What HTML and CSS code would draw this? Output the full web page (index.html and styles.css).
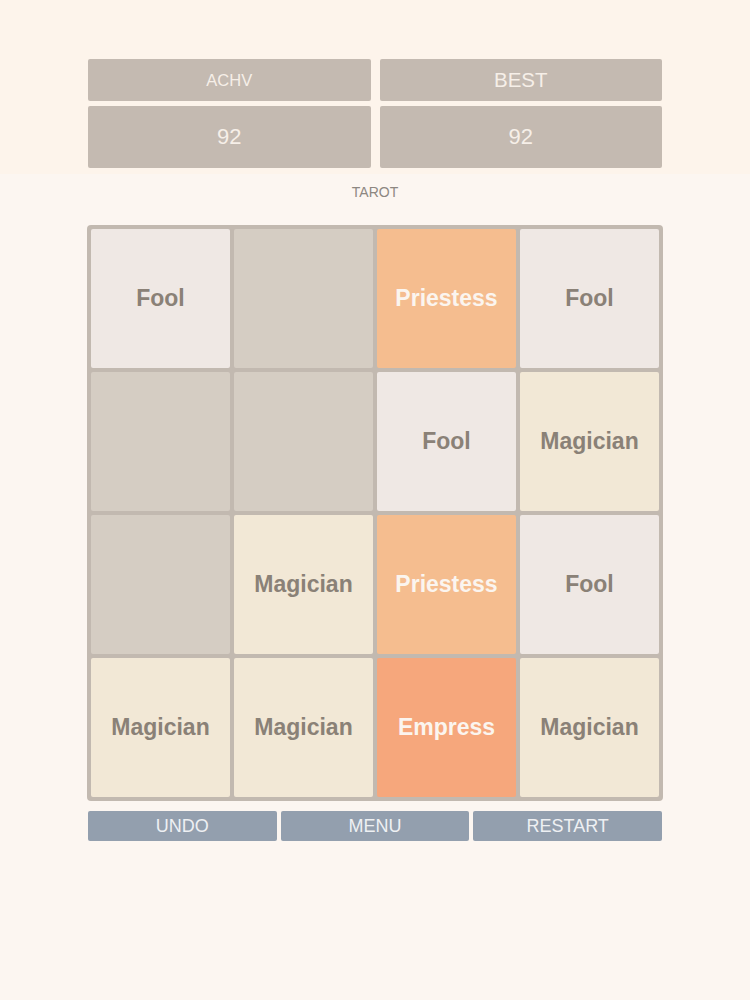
FILE: index.html
```html
<!DOCTYPE html>
<html>
<head>
<meta charset="utf-8">
<link rel="stylesheet" href="styles.css">
</head>
<body>
<div class="top">
  <div class="scores">
    <div class="col">
      <div class="box label small">ACHV</div>
      <div class="box value">92</div>
    </div>
    <div class="col">
      <div class="box label">BEST</div>
      <div class="box value">92</div>
    </div>
  </div>
</div>
<div class="main">
  <div class="title">TAROT</div>
  <div class="board">
    <div class="tile fool">Fool</div>
    <div class="tile empty"></div>
    <div class="tile priestess">Priestess</div>
    <div class="tile fool">Fool</div>

    <div class="tile empty"></div>
    <div class="tile empty"></div>
    <div class="tile fool">Fool</div>
    <div class="tile magician">Magician</div>

    <div class="tile empty"></div>
    <div class="tile magician">Magician</div>
    <div class="tile priestess">Priestess</div>
    <div class="tile fool">Fool</div>

    <div class="tile magician">Magician</div>
    <div class="tile magician">Magician</div>
    <div class="tile empress">Empress</div>
    <div class="tile magician">Magician</div>
  </div>
  <div class="buttons">
    <div class="btn">UNDO</div>
    <div class="btn">MENU</div>
    <div class="btn">RESTART</div>
  </div>
</div>
</body>
</html>
```
FILE: styles.css
```css
html, body {
  margin: 0;
  padding: 0;
  background: #fcf6f1;
  font-family: "Liberation Sans", Arial, sans-serif;
}
.top {
  background: #fdf4eb;
  height: 174px;
  padding-top: 59px;
  box-sizing: border-box;
}
.scores {
  width: 574px;
  margin: 0 auto;
  display: grid;
  grid-template-columns: 1fr 1fr;
  gap: 9px;
}
.col {
  display: flex;
  flex-direction: column;
  gap: 5px;
}
.box {
  background: #c4bab1;
  color: #f6efe8;
  border-radius: 2px;
  display: flex;
  align-items: center;
  justify-content: center;
}
.label {
  height: 42px;
  font-size: 20.5px;
}
.label.small {
  font-size: 16.5px;
}
.value {
  height: 62px;
  font-size: 22px;
}
.main {
  width: 576px;
  margin: 0 auto;
}
.title {
  text-align: center;
  font-size: 14px;
  color: #8d8781;
  height: 51px;
  line-height: 36px;
}
.board {
  background: #c2b9b0;
  border-radius: 4px;
  padding: 4px;
  display: grid;
  grid-template-columns: repeat(4, 139px);
  grid-auto-rows: 139px;
  gap: 4px;
}
.tile {
  border-radius: 2px;
  display: flex;
  align-items: center;
  justify-content: center;
  font-weight: bold;
  font-size: 23px;
  color: #8a8177;
}
.empty { background: #d5cdc3; }
.fool { background: #efe8e4; }
.magician { background: #f2e8d6; }
.priestess { background: #f5bd8f; color: #fbf5ef; }
.empress { background: #f6a77c; color: #fbf5ef; }
.buttons {
  margin: 10px 1px 0;
  display: grid;
  grid-template-columns: repeat(3, 1fr);
  gap: 4px;
}
.btn {
  background: #939fae;
  color: #eef0f3;
  height: 30px;
  border-radius: 2px;
  display: flex;
  align-items: center;
  justify-content: center;
  font-size: 18px;
}
```
